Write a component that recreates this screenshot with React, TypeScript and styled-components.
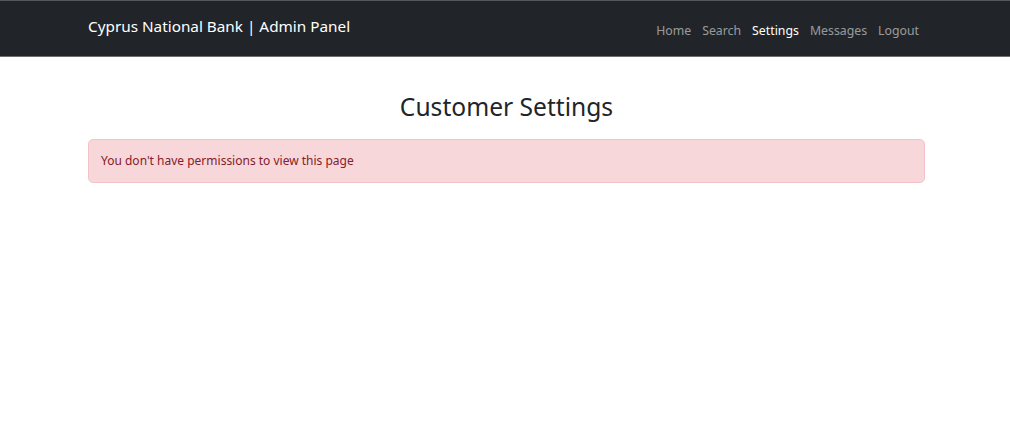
import React from "react";
import styled, { createGlobalStyle } from "styled-components";

const GlobalStyle = createGlobalStyle`
  body {
    margin: 0;
    background: #ffffff;
    font-family: "Noto Sans", "Liberation Sans", sans-serif;
    color: #212529;
  }
`;

const Navbar = styled.nav`
  background: #212529;
  border-top: 1px solid #54585c;
  border-bottom: 1px solid #6c6f72;
  height: 55px;
`;

const NavInner = styled.div`
  width: 837px;
  margin-left: 88px;
  height: 100%;
  display: flex;
  align-items: center;
  justify-content: space-between;
`;

const Brand = styled.a`
  color: #ffffff;
  font-size: 15.3px;
  text-decoration: none;
  margin-top: -6px;
`;

const NavLinks = styled.ul`
  list-style: none;
  margin: 0;
  padding: 0;
  display: flex;
  gap: 11px;
  margin-right: 6px;
`;

const NavLink = styled.a<{ active?: boolean }>`
  color: ${(p) => (p.active ? "#ffffff" : "rgba(255, 255, 255, 0.55)")};
  font-size: 12.3px;
  text-decoration: none;
`;

const Container = styled.main`
  width: 837px;
  margin-left: 88px;
`;

const Title = styled.h3`
  text-align: center;
  font-size: 24.6px;
  font-weight: 400;
  margin: 35px 0 17px;
  line-height: 1.2;
`;

const Alert = styled.div`
  background: #f8d7da;
  border: 1px solid #f5c2c7;
  color: #842029;
  border-radius: 5px;
  padding: 13px 12px;
  font-size: 12px;
  line-height: 16px;
`;

const links = ["Home", "Search", "Settings", "Messages", "Logout"];

export default function App() {
  return (
    <>
      <GlobalStyle />
      <Navbar>
        <NavInner>
          <Brand href="#">Cyprus National Bank | Admin Panel</Brand>
          <NavLinks>
            {links.map((l) => (
              <li key={l}>
                <NavLink href="#" active={l === "Settings"}>
                  {l}
                </NavLink>
              </li>
            ))}
          </NavLinks>
        </NavInner>
      </Navbar>
      <Container>
        <Title>Customer Settings</Title>
        <Alert>You don't have permissions to view this page</Alert>
      </Container>
    </>
  );
}
